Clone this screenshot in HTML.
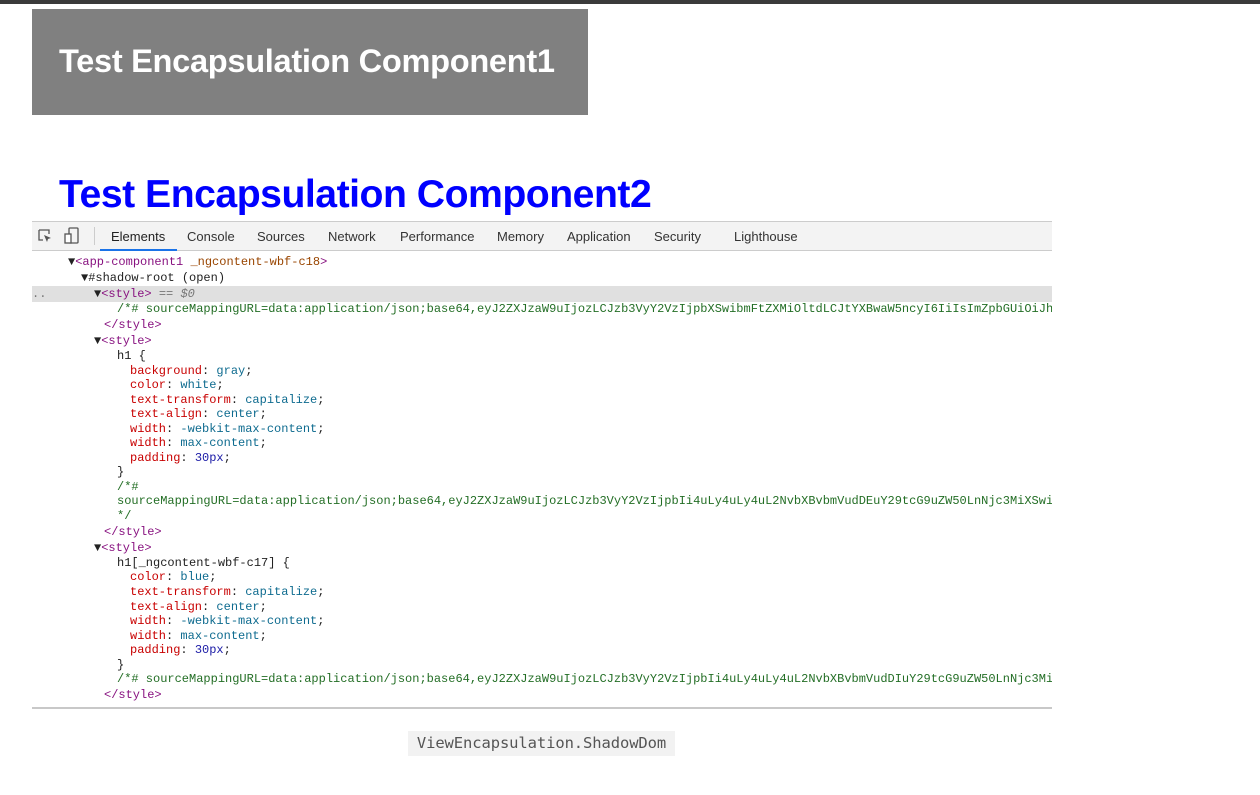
<!DOCTYPE html>
<html><head><meta charset="utf-8"><style>
body{margin:0;width:1260px;height:795px;background:#fff;position:relative;overflow:hidden;font-family:"Liberation Sans",sans-serif}
.top{position:absolute;left:0;top:0;width:1260px;height:4px;background:#3a3a3a}
.h1a{position:absolute;left:32px;top:9px;width:556px;height:106px;background:#808080;color:#fff;font-weight:bold;font-size:32.6px;line-height:104px;box-sizing:border-box;padding-left:27px;letter-spacing:-0.3px}
.h1b{position:absolute;left:59px;top:170px;color:#0000ff;font-weight:bold;font-size:39.2px;line-height:50px;letter-spacing:-0.5px}
.dt{position:absolute;left:32px;top:221px;width:1020px;height:488px;background:#fff;overflow:hidden;border-top:1px solid #ccc}
.tabs{position:absolute;left:0;top:0;width:1020px;height:28px;background:#f3f3f3;border-bottom:1px solid #ccc;font-size:13px;color:#333}
.tabs span{position:absolute;top:7px}
.sel{position:absolute;left:68px;top:27px;width:77px;height:2px;background:#1a73e8}
.l{position:absolute;font-family:"Liberation Mono",monospace;font-size:12px;white-space:pre;line-height:14px;color:#222}
.t{color:#881280}.a{color:#994500}.p{color:#c80000}.v{color:#1a1aa6}.g{color:#236e25}.k{color:#0e6b8f}
.hl{position:absolute;left:0;top:64px;width:1020px;height:16px;background:#e0e0e0}
.bot{position:absolute;left:32px;top:707px;width:1020px;height:2px;background:#c8c8c8}
.cap{position:absolute;left:408px;top:731px;width:267px;height:25px;background:#f2f2f2;font-family:"DejaVu Sans Mono",monospace;font-size:15.5px;color:#555;line-height:25px;text-align:center;letter-spacing:-0.1px}
</style></head><body>
<div class="top"></div>
<div class="h1a">Test Encapsulation Component1</div>
<div class="h1b">Test Encapsulation Component2</div>
<div class="dt">
<div class="tabs">
<svg style="position:absolute;left:5px;top:6px" width="16" height="16" viewBox="0 0 16 16"><path d="M2 2h10v4M2 2v10h4" fill="none" stroke="#555" stroke-width="1.3"/><path d="M7 7l7 3-3 1-1 3z" fill="#555"/></svg>
<svg style="position:absolute;left:32px;top:5px" width="16" height="18" viewBox="0 0 16 18"><rect x="5" y="1" width="9" height="15" rx="1" fill="none" stroke="#555" stroke-width="1.3"/><rect x="1" y="7" width="6" height="9" fill="#fff" stroke="#555" stroke-width="1.3"/></svg>
<div style="position:absolute;left:62px;top:5px;width:1px;height:18px;background:#ccc"></div>
<span style="left:79px;color:#222">Elements</span><span style="left:155px">Console</span><span style="left:225px">Sources</span><span style="left:296px">Network</span><span style="left:368px">Performance</span><span style="left:465px">Memory</span><span style="left:535px">Application</span><span style="left:622px">Security</span><span style="left:702px">Lighthouse</span>
<div class="sel"></div>
</div>
<div class="hl"></div>
<div class="l" style="left:36px;top:33px">▼<span class="t">&lt;app-component1</span> <span class="a">_ngcontent-wbf-c18</span><span class="t">&gt;</span></div>
<div class="l" style="left:49px;top:49px">▼#shadow-root (open)</div>
<div class="l" style="left:0;top:65px;color:#777">..</div>
<div class="l" style="left:62px;top:65px">▼<span class="t">&lt;style&gt;</span> <span style="color:#777">== <i>$0</i></span></div>
<div class="l g" style="left:85px;top:80px">/*# sourceMappingURL=data:application/json;base64,eyJ2ZXJzaW9uIjozLCJzb3VyY2VzIjpbXSwibmFtZXMiOltdLCJtYXBwaW5ncyI6IiIsImZpbGUiOiJhcHAuY2</div>
<div class="l t" style="left:72px;top:96px">&lt;/style&gt;</div>
<div class="l" style="left:62px;top:112px">▼<span class="t">&lt;style&gt;</span></div>
<div class="l" style="left:85px;top:127px">h1 {</div>
<div class="l" style="left:98px;top:142px"><span class="p">background</span>: <span class="k">gray</span>;</div>
<div class="l" style="left:98px;top:156px"><span class="p">color</span>: <span class="k">white</span>;</div>
<div class="l" style="left:98px;top:171px"><span class="p">text-transform</span>: <span class="k">capitalize</span>;</div>
<div class="l" style="left:98px;top:185px"><span class="p">text-align</span>: <span class="k">center</span>;</div>
<div class="l" style="left:98px;top:200px"><span class="p">width</span>: <span class="k">-webkit-max-content</span>;</div>
<div class="l" style="left:98px;top:214px"><span class="p">width</span>: <span class="k">max-content</span>;</div>
<div class="l" style="left:98px;top:229px"><span class="p">padding</span>: <span class="v">30px</span>;</div>
<div class="l" style="left:85px;top:243px">}</div>
<div class="l g" style="left:85px;top:258px">/*#</div>
<div class="l g" style="left:85px;top:272px">sourceMappingURL=data:application/json;base64,eyJ2ZXJzaW9uIjozLCJzb3VyY2VzIjpbIi4uLy4uLy4uL2NvbXBvbmVudDEuY29tcG9uZW50LnNjc3MiXSwibmFtZX</div>
<div class="l g" style="left:85px;top:287px">*/</div>
<div class="l t" style="left:72px;top:303px">&lt;/style&gt;</div>
<div class="l" style="left:62px;top:319px">▼<span class="t">&lt;style&gt;</span></div>
<div class="l" style="left:85px;top:334px">h1[_ngcontent-wbf-c17] {</div>
<div class="l" style="left:98px;top:348px"><span class="p">color</span>: <span class="k">blue</span>;</div>
<div class="l" style="left:98px;top:363px"><span class="p">text-transform</span>: <span class="k">capitalize</span>;</div>
<div class="l" style="left:98px;top:378px"><span class="p">text-align</span>: <span class="k">center</span>;</div>
<div class="l" style="left:98px;top:392px"><span class="p">width</span>: <span class="k">-webkit-max-content</span>;</div>
<div class="l" style="left:98px;top:407px"><span class="p">width</span>: <span class="k">max-content</span>;</div>
<div class="l" style="left:98px;top:421px"><span class="p">padding</span>: <span class="v">30px</span>;</div>
<div class="l" style="left:85px;top:436px">}</div>
<div class="l g" style="left:85px;top:450px">/*# sourceMappingURL=data:application/json;base64,eyJ2ZXJzaW9uIjozLCJzb3VyY2VzIjpbIi4uLy4uLy4uL2NvbXBvbmVudDIuY29tcG9uZW50LnNjc3MiXSwibm</div>
<div class="l t" style="left:72px;top:466px">&lt;/style&gt;</div>
</div>
<div class="bot"></div>
<div class="cap">ViewEncapsulation.ShadowDom</div>
</body></html>
